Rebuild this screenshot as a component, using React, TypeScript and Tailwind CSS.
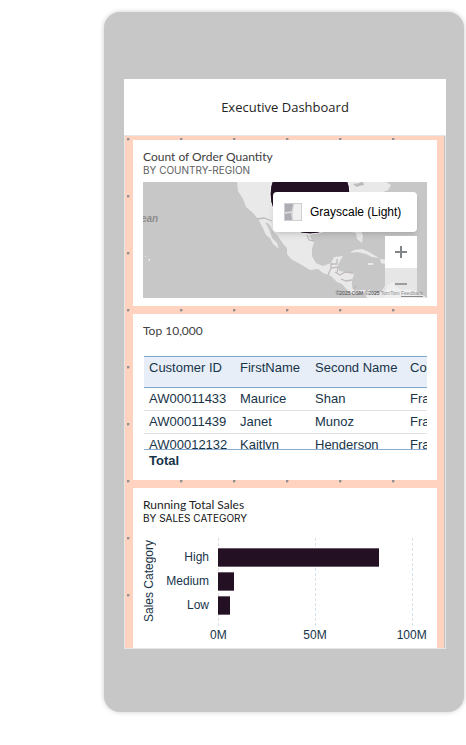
import React from "react";

const columns = ["Customer ID", "FirstName", "Second Name", "Country"];
const customers = [
  ["AW00011433", "Maurice", "Shan", "France"],
  ["AW00011439", "Janet", "Munoz", "France"],
  ["AW00012132", "Kaitlyn", "Henderson", "France"],
];
const sales = [
  { label: "High", value: 83 },
  { label: "Medium", value: 8 },
  { label: "Low", value: 6 },
];
const ticks = ["0M", "50M", "100M"];

function Card({ title, subtitle, dark, className, children }: {
  title: string;
  subtitle?: string;
  dark?: boolean;
  className: string;
  children: React.ReactNode;
}) {
  return (
    <section className={`flex flex-col overflow-hidden bg-white px-[10px] pt-2 ${className}`}>
      <h2 className={`font-['Lato',sans-serif] text-[12px] leading-[18px] ${dark ? "text-[#222222]" : "text-[#404040]"}`}>{title}</h2>
      {subtitle && (
        <p className={`font-['Inter',sans-serif] text-[10px] leading-[9px] ${dark ? "text-[#111111]" : "text-[#606060]"}`}>{subtitle}</p>
      )}
      {children}
    </section>
  );
}

function MapArt() {
  return (
    <svg viewBox="143 182 284 116" preserveAspectRatio="xMaxYMin slice" className="h-full w-full" role="img" aria-label="Map of North and Central America">
      <rect x="143" y="182" width="284" height="116" fill="#c7c7c7" />
      <path fill="#e9e9e9" d="M237 182 L238 191 L243 199 L246 207 L253 213 L258 219 L262 226 L266 235 L270 238 L273 244 L279 249 L277 243 L272 238 L269 229 L265 222 L269 224 L273 231 L278 236 L283 244 L287 248 L287 254 L291 259 L300 264 L310 270 L318 269 L323 273 L331 276 L337 282 L342 284 L348 291 L354 294 L360 291 L365 293 L367 298 L427 298 L420 293 L410 289 L402 290 L394 286 L394 282 L385 286 L381 292 L375 295 L369 290 L361 290 L355 291 L352 287 L352 280 L354 274 L346 272 L339 271 L338 265 L340 261 L343 256 L334 257 L331 263 L323 266 L316 263 L312 256 L312 249 L314 242 L309 236 L318 230 L335 229 L348 231 L356 233 L357 239 L362 243 L363 235 L358 225 L366 211 L372 203 L379 194 L388 190 L391 185 L386 182 Z" />
      <path fill="#e9e9e9" d="M350 253 L354 250 L362 249 L369 252 L379 258 L372 257 L366 254 L357 252 Z M380 259 L389 260 L395 263 L388 265 L381 263 Z M368 263 h5 v2 h-5z M399 263 h4 v2 h-4z M145 256h1v1h-1z M148 259h2v2h-1z" />
      <path fill="none" stroke="#c0babd" strokeWidth="1.3" d="M257 219 L264 218 L272 221 M307 235l2 5 5 1 M328 275l3-7 7-1-1 6 M331 268v-4h6v-5 M335 272l5 3 5-3 8 1 M341 279l5 2 6-1 M353 289l4-3 M385 290l2-5" />
      <path fill="#c7c7c7" stroke="#b7b7b7" strokeWidth="1.5" d="M354 184l3 2 6-4M356 186l8-2" />
      <circle cx="310" cy="194" r="40" fill="#231123" stroke="#fff" strokeWidth="1" />
      <text x="141" y="222" fontSize="10" fontStyle="italic" fontWeight="bold" fontFamily="Liberation Sans, sans-serif" fill="#8d8d8d">ean</text>
    </svg>
  );
}

function MapCard() {
  return (
    <Card title="Count of Order Quantity" subtitle="BY COUNTRY-REGION" className="h-[166px] shrink-0">
      <div className="relative mt-[7px] h-[116px] overflow-hidden">
        <MapArt />
        <button type="button" className="absolute top-[10px] right-[10px] flex h-10 w-36 items-center gap-2 rounded bg-white pl-[11px] font-['Liberation_Sans',Arial,sans-serif] text-[12px] whitespace-nowrap text-black shadow-md">
          <svg viewBox="0 0 18 18" className="h-[18px] w-[18px]" aria-hidden="true">
            <rect width="18" height="18" fill="#d0d0d4" />
            <path fill="#adadb3" d="M1 1h8l-1 7-7 1zM1 11l6-1 1 7H1z" />
            <path fill="#f0f0f0" d="M10 1h7v16H9V9z" />
            <path fill="none" stroke="#dedee0" d="M1 10l7-1 2-8M8 9l1 8" />
            <rect x=".5" y=".5" width="17" height="17" fill="none" stroke="#cfcfcf" />
          </svg>
          Grayscale (Light)
        </button>
        <div className="absolute top-[54px] right-[10px] flex w-8 flex-col">
          <button type="button" aria-label="Zoom in" className="flex h-8 items-center justify-center bg-white">
            <svg viewBox="0 0 12 12" className="h-3 w-3" aria-hidden="true"><path stroke="#808588" strokeWidth="2" d="M6 0v12M0 6h12" /></svg>
          </button>
          <button type="button" aria-label="Zoom out" className="flex h-8 items-center justify-center bg-[#f0f0f0]/75">
            <svg viewBox="0 0 12 12" className="h-3 w-3" aria-hidden="true"><path stroke="#9a9ea1" strokeWidth="2" d="M0 6h12" /></svg>
          </button>
        </div>
        <p className="absolute right-1 bottom-[1px] font-['Liberation_Sans',sans-serif] text-[5px] leading-[8px] text-[#444444]">
          ©2025 OSM ©2025 <span className="text-[#8a8a8a]">TomTom <a href="#feedback" className="underline">Feedback</a></span>
        </p>
      </div>
    </Card>
  );
}

function TableCard() {
  return (
    <Card title="Top 10,000" className="h-[166px] shrink-0">
      <div className="mt-4 ml-px h-[94px] overflow-hidden border-b border-[#8aaccc] font-['Liberation_Sans',Arial,sans-serif] text-[13px] text-[#173449]">
        <table className="w-[340px] table-fixed border-collapse text-left">
          <colgroup>
            <col className="w-[91px]" />
            <col className="w-[75px]" />
            <col className="w-[95px]" />
            <col />
          </colgroup>
          <thead>
            <tr className="h-[31px] border-y border-[#80a8d0] bg-[#e7eef7]">
              {columns.map((c) => (
                <th key={c} scope="col" className="pt-[3px] pl-[5px] align-top leading-4 font-normal whitespace-nowrap">{c}</th>
              ))}
            </tr>
          </thead>
          <tbody>
            {customers.map((row) => (
              <tr key={row[0]} className="h-[23px] border-b border-[#e2e2e2]">
                {row.map((cell, i) => (
                  <td key={i} className="pl-[5px] leading-[18px] whitespace-nowrap">{cell}</td>
                ))}
              </tr>
            ))}
          </tbody>
        </table>
      </div>
      <div className="ml-px pl-[5px] font-['Liberation_Sans',Arial,sans-serif] text-[13px] leading-[22px] font-bold text-[#173449]">Total</div>
    </Card>
  );
}

function SalesCard() {
  return (
    <Card title="Running Total Sales" subtitle="BY SALES CATEGORY" dark className="min-h-0 flex-1">
      <div className="mt-[15px] flex font-['Liberation_Sans',Arial,sans-serif] text-[12px] text-[#173449]">
        <div className="flex h-[86px] w-3 rotate-180 items-center justify-center leading-3 whitespace-nowrap [writing-mode:vertical-rl]">Sales Category</div>
        <div className="flex w-[54px] flex-col pt-[7px] text-right">
          {sales.map((s) => (
            <span key={s.label} className="h-6 leading-6">{s.label}</span>
          ))}
        </div>
        <div className="ml-[9px] flex w-[194px] flex-col">
          <div className="-mr-px flex h-[88px] flex-col gap-[5px] bg-[repeating-linear-gradient(#fff0_0_3px,#fff_3px_5px),linear-gradient(90deg,#d5e0e8_1px,#fff0_1px)] bg-[length:97px_100%] pt-[10px] pr-px">
            {sales.map((s) => (
              <div key={s.label} className="h-[19px] border-y border-[#6b5c6b] bg-[#231123]" style={{ width: `${s.value}%` }} />
            ))}
          </div>
          <div className="-mx-12 flex text-center leading-[18px]">
            {ticks.map((t) => (
              <span key={t} className="flex-1">{t}</span>
            ))}
          </div>
        </div>
      </div>
    </Card>
  );
}

export default function App() {
  return (
    <div className="min-h-screen bg-white pt-3 pr-[2px] pb-8 pl-[104px]">
      <main className="rounded-2xl bg-[#c7c7c7] pt-[67px] pr-[18px] pb-[63px] pl-5 shadow-[0_0_5px_#00000033]">
        <header className="flex h-14 items-center justify-center bg-white">
          <h1 className="font-['Open_Sans',sans-serif] text-[13px] leading-5 text-[#252423]">Executive Dashboard</h1>
        </header>
        <div className="border border-[#e6e6e6]">
          <div className="flex h-[512px] flex-col gap-2 border-r border-[#c0c0c0] bg-[#ffd3bf] bg-[radial-gradient(circle_at_1px_1px,#909090_1px,#fff0_2px)] bg-[length:53px_57px] bg-[position:2px_2px] pt-1 pr-[7px] pl-2">
            <MapCard />
            <TableCard />
            <SalesCard />
          </div>
        </div>
      </main>
    </div>
  );
}
